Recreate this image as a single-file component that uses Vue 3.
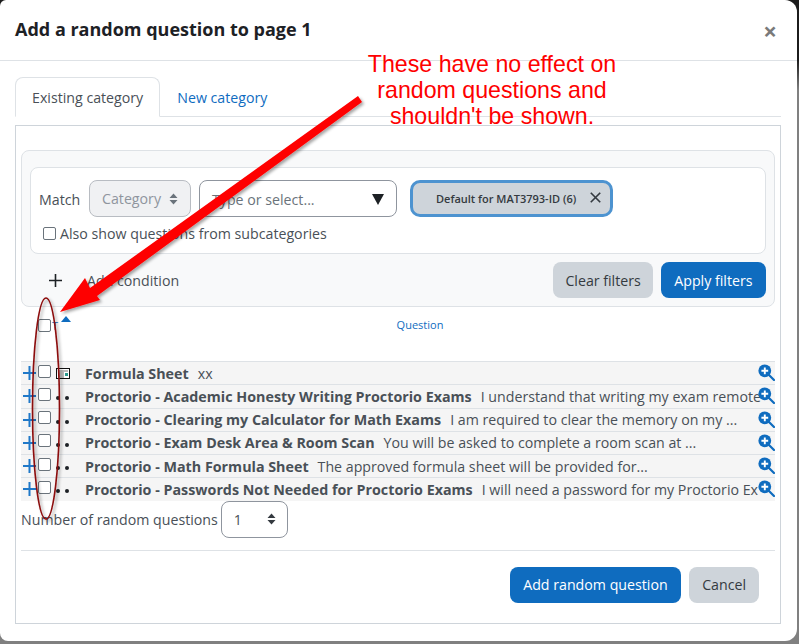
<template>
  <div class="backdrop">
    <main class="modal">
      <header class="modal-head">
        <h5>Add a random question to page 1</h5>
        <span class="close">×</span>
      </header>

      <div class="modal-body">
        <ul class="tabs">
          <li class="tab active">Existing category</li>
          <li class="tab">New category</li>
        </ul>

        <section class="tab-pane">
          <div class="filters">
            <div class="condition">
              <div class="cond-row">
                <span class="match">Match</span>
                <div class="select disabled">
                  <span>Category</span>
                  <svg class="updown" width="9" height="12" viewBox="0 0 9 12"><path d="M4.5 0.5 8.5 5H.5zM4.5 11.5 .5 7h8z" fill="#6a737b" /></svg>
                </div>
                <div class="typeahead">
                  <span>Type or select...</span>
                  <svg width="12" height="11" viewBox="0 0 12 11"><path d="M0 0h12L6 11z" fill="#1d2125" /></svg>
                </div>
                <div class="pill">
                  <span>Default for MAT3793-ID (6)</span>
                  <svg class="pill-x" width="10" height="10" viewBox="0 0 10 10"><path d="M.7.7l8.6 8.6M9.3.7.7 9.3" stroke="#343a40" stroke-width="1.5" fill="none" /></svg>
                </div>
              </div>
              <label class="sub">
                <span class="box"></span>
                Also show questions from subcategories
              </label>
            </div>
            <div class="filter-actions">
              <span class="plus-big">
                <svg width="13" height="13" viewBox="0 0 13 13"><path d="M6.5 0v13M0 6.5h13" stroke="#1d2125" stroke-width="1.6" /></svg>
              </span>
              <span class="add-cond">Add condition</span>
              <button class="btn grey clear">Clear filters</button>
              <button class="btn blue apply">Apply filters</button>
            </div>
          </div>

          <div class="head-row">
            <span class="box head-box"></span>
            <a class="type-link">T</a>
            <span class="sort-up"></span>
            <a class="question-link">Question</a>
          </div>

          <div class="rows">
            <div v-for="row in rows" :key="row.name" class="row">
              <svg class="add" width="13" height="14" viewBox="0 0 13 14"><path d="M6.5 0v14M0 7h13" stroke="#1f78c8" stroke-width="2" /></svg>
              <span class="box"></span>
              <svg v-if="row.kind === 'sheet'" class="qtype" width="14" height="11" viewBox="0 0 14 11">
                <rect x=".5" y=".5" width="13" height="10" fill="#fff" stroke="#111" />
                <path d="M2 3h10M2 5h6M2 7h6M2 9h6" stroke="#777" />
                <rect x="9" y="5" width="3" height="3" fill="#2b9a8f" />
              </svg>
              <span v-else class="dots"><i></i><i></i></span>
              <span class="text"><b>{{ row.name }}</b><span class="desc">{{ row.desc }}</span></span>
              <svg class="zoom" width="17" height="17" viewBox="0 0 17 17">
                <path d="M11 11l5 5" stroke="#0f6cbf" stroke-width="2.2" stroke-linecap="round" />
                <circle cx="6.8" cy="6.8" r="6.4" fill="#0f6cbf" />
                <path d="M6.8 3.4v6.8M3.4 6.8h6.8" stroke="#fff" stroke-width="1.9" />
              </svg>
            </div>
          </div>

          <div class="number">
            <span>Number of random questions</span>
            <div class="select count">
              <span>1</span>
              <svg class="updown" width="9" height="12" viewBox="0 0 9 12"><path d="M4.5 0.5 8.5 5H.5zM4.5 11.5 .5 7h8z" fill="#343a40" /></svg>
            </div>
          </div>

          <footer class="modal-foot">
            <button class="btn blue submit">Add random question</button>
            <button class="btn grey">Cancel</button>
          </footer>
        </section>
      </div>
    </main>

    <!-- annotation drawn on top of the screenshot -->
    <svg class="markup" width="799" height="644" viewBox="0 0 799 644">
      <defs>
        <filter id="soft" x="-20%" y="-20%" width="140%" height="140%">
          <feDropShadow dx="2" dy="2" stdDeviation="1.5" flood-color="#000" flood-opacity="0.35" />
        </filter>
      </defs>
      <path d="M358 96 362 102 97 296 100 300 60 312 85 278 90 288z" fill="#fe0000" filter="url(#soft)" />
      <ellipse cx="46" cy="408.5" rx="13.5" ry="110.5" fill="none" stroke="#8b0a0a" stroke-width="1.6" filter="url(#soft)" />
    </svg>
    <p class="note">These have no effect on<br />random questions and<br />shouldn't be shown.</p>
  </div>
</template>

<script setup>
const rows = [
  { name: "Formula Sheet", desc: "xx", kind: "sheet" },
  { name: "Proctorio - Academic Honesty Writing Proctorio Exams", desc: "I understand that writing my exam remote" },
  { name: "Proctorio - Clearing my Calculator for Math Exams", desc: "I am required to clear the memory on my ..." },
  { name: "Proctorio - Exam Desk Area & Room Scan", desc: "You will be asked to complete a room scan at ..." },
  { name: "Proctorio - Math Formula Sheet", desc: "The approved formula sheet will be provided for..." },
  { name: "Proctorio - Passwords Not Needed for Proctorio Exams", desc: "I will need a password for my Proctorio Ex" },
];
</script>

<style>
html,
body {
  margin: 0;
  background: #808080;
}
</style>

<style scoped>
.backdrop {
  position: relative;
  width: 799px;
  height: 644px;
  overflow: hidden;
  background: linear-gradient(#1c1c1c 0, #1c1c1c 60px, #808080 90px);
  font-family: "Open Sans", "Noto Sans", sans-serif;
  font-size: 14.2px;
  color: #495057;
}

.modal {
  width: 797px;
  height: 641px;
  background: #fff;
  border-radius: 6px 12px 12px 8px;
  box-sizing: border-box;
}

.modal-head {
  height: 61px;
  box-sizing: border-box;
  border-bottom: 1px solid #dee2e6;
  display: flex;
  align-items: center;
  justify-content: space-between;
  padding: 0 15px;
}
.modal-head h5 {
  margin: 0;
  font-size: 18px;
  font-weight: 700;
  color: #1d2125;
  position: relative;
  top: -1px;
}
.close {
  font-size: 24px;
  font-weight: 700;
  color: #7a7a7a;
  margin: 2px 5px 0 0;
  line-height: 1;
}

.modal-body {
  padding: 16px 16px 0 15px;
}

.tabs {
  list-style: none;
  margin: 0;
  padding: 0;
  display: flex;
  height: 39px;
  border-bottom: 1px solid #dee2e6;
}
.tab {
  padding: 0 16px;
  height: 39px;
  line-height: 40px;
  color: #0f6cbf;
  box-sizing: border-box;
  border: 1px solid transparent;
}
.tab.active {
  color: #495057;
  background: #fff;
  height: 40px;
  border-color: #dee2e6 #dee2e6 #fff;
  border-radius: 8px 8px 0 0;
}

.tab-pane {
  margin-top: 8px;
  height: 499px;
  box-sizing: border-box;
  border: 1px solid #ced4da;
  padding: 24px 5px 0 5px;
}

.filters {
  height: 157px;
  box-sizing: border-box;
  background: #f8f9fa;
  border: 1px solid #dee2e6;
  border-radius: 8px;
  padding: 16px 8px 0;
}
.condition {
  height: 87px;
  box-sizing: border-box;
  background: #fff;
  border: 1px solid #dee2e6;
  border-radius: 8px;
  padding: 12px 8px 0;
}
.cond-row {
  display: flex;
  align-items: center;
  gap: 8px;
}
.match {
  width: 42px;
  padding-top: 1px;
}
.select {
  display: flex;
  align-items: center;
  justify-content: space-between;
  box-sizing: border-box;
  height: 37px;
  border: 1px solid #8f959e;
  border-radius: 8px;
  padding: 0 12px 0 12px;
}
.select.disabled {
  width: 102px;
  background: #f0f1f3;
  border-color: #b8bcc2;
  color: #8f959e;
}
.typeahead {
  width: 198px;
  height: 37px;
  box-sizing: border-box;
  border: 1px solid #8f959e;
  border-radius: 8px;
  display: flex;
  align-items: center;
  justify-content: space-between;
  padding: 1px 12px 0;
  color: #6a737b;
}
.pill {
  width: 203px;
  height: 37px;
  box-sizing: border-box;
  margin-left: 5px;
  background: #ced4da;
  border: 3px solid #4d93d0;
  border-radius: 10px;
  display: flex;
  align-items: center;
  gap: 14px;
  padding-left: 23px;
  font-size: 11px;
  font-weight: 600;
  color: #343a40;
}
.pill-x {
  width: 11px;
  height: 11px;
  margin-bottom: 3px;
}
.sub {
  display: flex;
  align-items: center;
  gap: 4px;
  margin: 7px 0 0 4px;
}

.box {
  flex: none;
  display: inline-block;
  width: 11px;
  height: 11px;
  border: 1px solid #6a737b;
  border-radius: 2px;
  background: #fff;
}

.filter-actions {
  display: flex;
  align-items: center;
  gap: 8px;
  margin-top: 8px;
}
.plus-big {
  display: flex;
  margin-left: 19px;
  margin-right: 17px;
}
.add-cond {
  margin-right: auto;
}

.btn {
  font: inherit;
  height: 36px;
  border: 0;
  border-radius: 8px;
  padding: 0 13px;
}
.btn.clear {
  padding: 0 12px;
}
.btn.apply {
  padding: 0 13.5px;
}
.btn.submit {
  padding: 0 13.5px;
}
.btn.grey {
  background: #ced4da;
  color: #343a40;
}
.btn.blue {
  background: #0f6cbf;
  color: #fff;
}

.head-row {
  position: relative;
  height: 54px;
}
.head-box {
  position: absolute;
  left: 17px;
  top: 12px;
}
.type-link {
  position: absolute;
  left: 31px;
  top: 12px;
  font-size: 11px;
  line-height: 13px;
  color: #0f6cbf;
}
.sort-up {
  position: absolute;
  left: 40px;
  top: 9px;
  border-left: 5px solid transparent;
  border-right: 5px solid transparent;
  border-bottom: 6px solid #0f6cbf;
}
.question-link {
  display: block;
  text-align: center;
  font-size: 11px;
  color: #0f6cbf;
  padding: 10px 0 0 44px;
}

.row {
  height: 23.25px;
  box-sizing: border-box;
  border-top: 1px solid #dee2e6;
  background: #f5f5f5;
  display: flex;
  align-items: center;
  white-space: nowrap;
  position: relative;
  padding-left: 2px;
}
.add {
  flex: none;
  margin-right: 2px;
}
.row .box {
  margin-bottom: 4px;
}
.qtype {
  flex: none;
  margin-left: 5px;
  width: 14px;
}
.dots {
  flex: none;
  width: 14px;
  margin-left: 5px;
  display: flex;
  gap: 5px;
  padding-top: 4px;
}
.dots i {
  width: 4px;
  height: 4px;
  border-radius: 50%;
  background: #1d2125;
}
.text {
  margin-left: 15px;
  flex: 1;
}
.text b {
  font-size: 14.3px;
  margin-right: 9px;
}
.zoom {
  position: absolute;
  right: 0;
  top: 2px;
}

.number {
  display: flex;
  align-items: center;
  gap: 3px;
}
.select.count {
  width: 67px;
  padding: 0 11px 0 12px;
}

.modal-foot {
  margin-top: 12px;
  border-top: 1px solid #dee2e6;
  padding: 16px 16px 0 0;
  display: flex;
  justify-content: flex-end;
  gap: 8px;
}

.markup {
  position: absolute;
  left: 0;
  top: 0;
  pointer-events: none;
}
.note {
  position: absolute;
  left: 342px;
  top: 51px;
  width: 300px;
  margin: 0;
  text-align: center;
  white-space: nowrap;
  font-family: "Liberation Sans", Arial, sans-serif;
  font-size: 23.2px;
  line-height: 26px;
  color: #fe0000;
}
</style>
